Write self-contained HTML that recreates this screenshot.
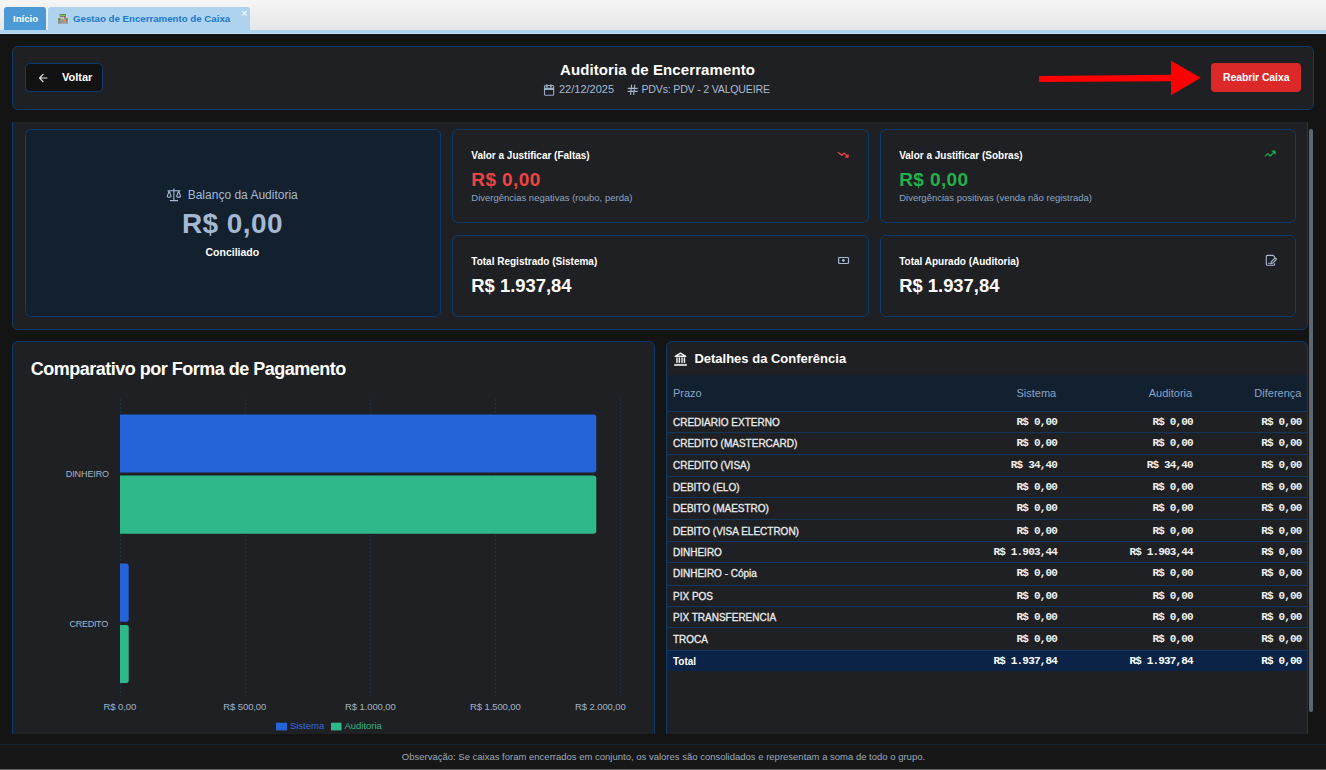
<!DOCTYPE html>
<html><head><meta charset="utf-8">
<style>
*{box-sizing:border-box;margin:0;padding:0}
html,body{width:1326px;height:770px;overflow:hidden;background:#141414;font-family:"Liberation Sans",sans-serif;color:#f2f2f2}
.a{position:absolute}
.t{position:absolute;line-height:1;white-space:nowrap}
.b{font-weight:bold}
.card{position:absolute;border:1px solid #0c3b6c;border-radius:6px;background:#1f2023}
.mono{font-family:"Liberation Mono",monospace}
</style></head><body>

<!-- tab bar -->
<div class="a" style="left:0;top:0;width:1326px;height:30px;background:linear-gradient(#f6f6f6,#e6e6e6)"></div>
<div class="a" style="left:4px;top:7px;width:42px;height:23px;background:#4b9ad6;border-radius:3px 3px 0 0"></div>
<div class="t b" style="left:13px;top:14.3px;font-size:9.6px;color:#fff">Início</div>
<div class="a" style="left:48px;top:7px;width:202px;height:23px;background:#afd2ee;border-radius:3px 3px 0 0"></div>
<svg class="a" style="left:57px;top:13px" width="12" height="12" viewBox="0 0 12 12">
 <rect x="2.8" y="1" width="5.9" height="2.7" fill="#4a4a4a"/><rect x="3.1" y="1.5" width="5.3" height="1.5" fill="#86c84e"/>
 <rect x="2.8" y="3.7" width="5.9" height="7" fill="#9a9a9a"/><rect x="3.6" y="4.2" width="1.2" height="2" fill="#e0e0e0"/><rect x="5.6" y="4.2" width="1.2" height="2" fill="#e0e0e0"/>
 <rect x="1" y="5.3" width="2.5" height="5.4" fill="#8d8d8d"/><rect x="1" y="5.3" width="2.5" height="1.4" fill="#5e9e3a"/>
 <rect x="8.6" y="5.3" width="2.1" height="5.4" fill="#8d8d8d"/><rect x="8.6" y="5.3" width="2.1" height="1.4" fill="#5e9e3a"/>
 <circle cx="7.8" cy="4.2" r="0.8" fill="#d94040"/><circle cx="7.5" cy="7.3" r="0.7" fill="#e9a020"/><rect x="9" y="7.2" width="1.4" height="0.9" fill="#c05050"/>
</svg>
<div class="t b" style="left:73px;top:14.2px;font-size:9.7px;color:#1a78cf">Gestao de Encerramento de Caixa</div>
<div class="t" style="left:241px;top:8px;font-size:11px;color:#fff">×</div>
<div class="a" style="left:0;top:30px;width:1326px;height:4px;background:#acd2ee;border-bottom:1px solid #c2e0f4"></div>

<!-- header card -->
<div class="card" style="left:12px;top:46px;width:1302px;height:64px"></div>
<div class="a" style="left:25px;top:63px;width:78px;height:29px;background:#121212;border:1px solid #0c3b6c;border-radius:5px"></div>
<svg class="a" style="left:38px;top:72.9px" width="10" height="10" viewBox="0 0 10 10"><path d="M8.9 5H1.6M5.1 1.3L1.6 5L5 8.7" fill="none" stroke="#e6e6e6" stroke-width="1.2" stroke-linecap="round" stroke-linejoin="round"/></svg>
<div class="t b" style="left:62px;top:71.5px;font-size:11px;color:#fff">Voltar</div>

<div class="t b" style="left:560px;top:62px;font-size:15px;color:#fff;letter-spacing:0.1px">Auditoria de Encerramento</div>
<svg class="a" style="left:543px;top:83px" width="12" height="13" viewBox="0 0 12 13"><rect x="1.5" y="2.5" width="9.2" height="9.8" rx="1" fill="none" stroke="#9aaec6" stroke-width="1.1"/><rect x="1.5" y="4.7" width="9.2" height="2.3" fill="#9aaec6"/><path d="M3.9 2V3.9M7.9 2V3.9" stroke="#9aaec6" stroke-width="1.6" stroke-linecap="round"/></svg>
<div class="t" style="left:559px;top:84px;font-size:11px;color:#a6bad2">22/12/2025</div>
<svg class="a" style="left:627px;top:84px" width="11" height="11" viewBox="0 0 11 11"><path d="M1.2 4.4H10.2M1.2 7.4H10.2M4.6 1L3.6 10.7M7.7 1L6.7 10.7" stroke="#a3b6cd" stroke-width="1.1" stroke-linecap="round"/></svg>
<div class="t" style="left:641.5px;top:84.2px;font-size:10.6px;color:#a6bad2;letter-spacing:-0.2px">PDVs: PDV - 2 VALQUEIRE</div>

<svg class="a" style="left:1030px;top:55px" width="180" height="45" viewBox="1030 55 180 45">
 <path d="M1039 76 L1172 74.8 L1172 81.2 L1039 82 Z" fill="#ff0000"/>
 <path d="M1171 60.8 L1200.8 77.8 L1171 95.3 Z" fill="#ff0000"/>
</svg>
<div class="a" style="left:1211px;top:63px;width:90px;height:29px;background:#dc2828;border-radius:4px"></div>
<div class="t b" style="left:1223px;top:72px;font-size:10.5px;color:#fff;letter-spacing:-0.1px">Reabrir Caixa</div>

<!-- scroll area -->
<div class="a" style="left:0;top:122px;width:1326px;height:612px;overflow:hidden">
 <div class="a" style="left:12px;top:-6px;width:1296px;height:214px;background:#1f2023;border:1px solid #0c3b6c;border-radius:6px"></div>
 <!-- balance -->
 <div class="card" style="left:25px;top:7px;width:416px;height:188px;background:#13202e"></div>
 <svg class="a" style="left:166px;top:65.5px" width="16" height="14" viewBox="0 0 16 14"><g fill="none" stroke="#a6bad2" stroke-width="1.1" stroke-linecap="round" stroke-linejoin="round"><path d="M7.9 0.9V12.5M4.3 12.6H11.6M1.9 2.9Q7.9 2 13.9 2.9M3.2 3L1.2 8.4Q3.2 10.4 5.2 8.4L3.2 3M12.6 3L10.6 8.4Q12.6 10.4 14.6 8.4L12.6 3"/></g></svg>
 <div class="t" style="left:187.7px;top:66.5px;font-size:12px;color:#a6bad2">Balanço da Auditoria</div>
 <div class="t b" style="left:182px;top:87.5px;font-size:28px;color:#a4b9d1;letter-spacing:0.4px">R$ 0,00</div>
 <div class="t b" style="left:205.5px;top:124.6px;font-size:10.5px;color:#fff">Conciliado</div>

 <!-- faltas -->
 <div class="card" style="left:452.3px;top:7px;width:416.6px;height:94px"></div>
 <div class="t b" style="left:471.3px;top:29.2px;font-size:10px;color:#fff">Valor a Justificar (Faltas)</div>
 <svg class="a" style="left:837px;top:28px" width="13" height="9" viewBox="0 0 13 9"><path d="M1 2.2L4.9 5.3L7.3 3.1L10.5 6.6M8.2 7.1H11V4.3" fill="none" stroke="#ef4444" stroke-width="1.3" stroke-linejoin="round"/></svg>
 <div class="t b" style="left:471.3px;top:48px;font-size:19px;color:#ef4444;letter-spacing:0.4px">R$ 0,00</div>
 <div class="t" style="left:471.3px;top:71px;font-size:9.5px;color:#8ea6c2">Divergências negativas (roubo, perda)</div>

 <!-- sobras -->
 <div class="card" style="left:880.3px;top:7px;width:415.7px;height:94px"></div>
 <div class="t b" style="left:899.2px;top:29.2px;font-size:10px;color:#fff">Valor a Justificar (Sobras)</div>
 <svg class="a" style="left:1264.3px;top:27px" width="13" height="9" viewBox="0 0 13 9"><path d="M0.9 7.4L3.8 4.6L6.2 7L10.5 2.7M7.7 2.2H11V5.4" fill="none" stroke="#1bae4f" stroke-width="1.3" stroke-linejoin="round"/></svg>
 <div class="t b" style="left:899.2px;top:48px;font-size:19px;color:#22b14c;letter-spacing:0.4px">R$ 0,00</div>
 <div class="t" style="left:899.2px;top:71px;font-size:9.5px;color:#8ea6c2">Divergências positivas (venda não registrada)</div>

 <!-- registrado -->
 <div class="card" style="left:452.3px;top:113px;width:416.6px;height:82px"></div>
 <div class="t b" style="left:471.3px;top:135.2px;font-size:10px;color:#fff">Total Registrado (Sistema)</div>
 <svg class="a" style="left:837px;top:134px" width="13" height="9" viewBox="0 0 13 9"><rect x="1.6" y="1.5" width="9.9" height="6" rx="1" fill="none" stroke="#a6bad2" stroke-width="1.2"/><circle cx="6.4" cy="4.4" r="1.4" fill="#a6bad2"/></svg>
 <div class="t b" style="left:471.3px;top:154.9px;font-size:18.4px;color:#fff">R$ 1.937,84</div>

 <!-- apurado -->
 <div class="card" style="left:880.3px;top:113px;width:415.7px;height:82px"></div>
 <div class="t b" style="left:899.2px;top:135.2px;font-size:10px;color:#fff">Total Apurado (Auditoria)</div>
 <svg class="a" style="left:1264px;top:132px" width="14" height="13" viewBox="0 0 14 13"><g fill="none" stroke="#a6bad2" stroke-width="1.1" stroke-linecap="round" stroke-linejoin="round"><path d="M10.6 3.6V2.9L9.1 1.4H3.4Q2.3 1.4 2.3 2.5V10.2Q2.3 11.3 3.4 11.3H9.6Q10.7 11.3 10.7 10.2V9.9"/><path d="M4.4 9.3H5.4"/><path d="M12.2 4.6Q11.3 3.7 10.4 4.6L7.6 7.4Q7.2 7.8 7.1 8.3L6.8 9.6L8.1 9.3Q8.6 9.2 9 8.8L11.8 6Q12.7 5.1 12.2 4.6Z"/></g></svg>
 <div class="t b" style="left:899.2px;top:154.9px;font-size:18.4px;color:#fff">R$ 1.937,84</div>

 <!-- chart card -->
 <div class="card" style="left:12px;top:219px;width:643px;height:420px"></div>
 <div class="t b" style="left:30.8px;top:238.4px;font-size:18px;color:#fff;letter-spacing:-0.5px">Comparativo por Forma de Pagamento</div>
 <svg class="a" style="left:0;top:0" width="660" height="612" viewBox="0 122 660 612">
  <g stroke="#1b3149" stroke-width="1" stroke-dasharray="2 2">
   <path d="M120.5 399V696M245.5 399V696M370.5 399V696M495.5 399V696M620.5 399V696"/>
  </g>
  <path d="M120 414.4H593.3Q596.3 414.4 596.3 417.4V469.6Q596.3 472.6 593.3 472.6H120Z" fill="#2563d9"/>
  <path d="M120 475.5H593.3Q596.3 475.5 596.3 478.5V530.8Q596.3 533.8 593.3 533.8H120Z" fill="#2fb98a"/>
  <path d="M120 563.6H126.4Q128.7 563.6 128.7 565.9V619.4Q128.7 621.7 126.4 621.7H120Z" fill="#2563d9"/>
  <path d="M120 625H126.4Q128.7 625 128.7 627.3V680.8Q128.7 683.1 126.4 683.1H120Z" fill="#2fb98a"/>
  <rect x="276" y="722.7" width="11" height="7.7" fill="#2563d9"/>
  <rect x="331" y="722.7" width="10.5" height="7.7" fill="#2fb98a"/>
 </svg>
 <div class="t" style="left:65.8px;top:348px;font-size:9px;color:#a3b4c8;letter-spacing:-0.1px">DINHEIRO</div>
 <div class="t" style="left:69.6px;top:497.5px;font-size:9px;color:#a3b4c8;letter-spacing:-0.3px">CREDITO</div>
 <div class="t" style="left:103.6px;top:580px;font-size:9.5px;color:#9fb2c8;letter-spacing:-0.1px">R$ 0,00</div>
 <div class="t" style="left:223.3px;top:580px;font-size:9.5px;color:#9fb2c8;letter-spacing:-0.1px">R$ 500,00</div>
 <div class="t" style="left:345px;top:580px;font-size:9.5px;color:#9fb2c8;letter-spacing:-0.1px">R$ 1.000,00</div>
 <div class="t" style="left:470px;top:580px;font-size:9.5px;color:#9fb2c8;letter-spacing:-0.1px">R$ 1.500,00</div>
 <div class="t" style="left:575px;top:580px;font-size:9.5px;color:#9fb2c8;letter-spacing:-0.1px">R$ 2.000,00</div>
 <div class="t" style="left:289.9px;top:598.6px;font-size:9.5px;color:#2f6ae0">Sistema</div>
 <div class="t" style="left:344.4px;top:598.6px;font-size:9.5px;color:#2fb98a">Auditoria</div>

 <!-- table card -->
 <div class="card" style="left:666px;top:219px;width:642px;height:420px"></div>
 <svg class="a" style="left:673px;top:230px" width="15" height="15" viewBox="0 0 15 15"><path d="M7.5 1.2L2.2 4.3H12.8Z" fill="none" stroke="#f0f0f0" stroke-width="1.5" stroke-linejoin="round"/><rect x="3.1" y="5.4" width="1.7" height="5.5" fill="#cfcfcf"/><rect x="5.6" y="5.4" width="1.5" height="5.5" fill="#eeeeee"/><rect x="8.2" y="5.4" width="1.7" height="5.5" fill="#cfcfcf"/><rect x="10.7" y="5.4" width="1.5" height="5.5" fill="#eeeeee"/><rect x="1.2" y="11.9" width="12.7" height="2.1" fill="#c8c8c8"/></svg>
 <div class="t b" style="left:694.4px;top:229.80px;font-size:13px;color:#fff">Detalhes da Conferência</div>
 <div class="a" style="left:667px;top:253.00px;width:640px;height:36.00px;background:#122030"></div>
 <div class="t" style="left:673.00px;top:265.69px;font-size:11px;color:#8aa4c2;">Prazo</div>
 <div class="t" style="right:269.80px;top:265.69px;font-size:11px;color:#8aa4c2;">Sistema</div>
 <div class="t" style="right:133.90px;top:265.69px;font-size:11px;color:#8aa4c2;">Auditoria</div>
 <div class="t" style="right:24.60px;top:265.69px;font-size:11px;color:#8aa4c2;">Diferença</div>
 <div class="a" style="left:667px;top:288.70px;width:640px;height:1px;background:#11375f"></div>
 <div class="a" style="left:667px;top:310.00px;width:640px;height:1px;background:#11375f"></div>
 <div class="a" style="left:667px;top:331.50px;width:640px;height:1px;background:#11375f"></div>
 <div class="a" style="left:667px;top:354.10px;width:640px;height:1px;background:#11375f"></div>
 <div class="a" style="left:667px;top:375.10px;width:640px;height:1px;background:#11375f"></div>
 <div class="a" style="left:667px;top:396.60px;width:640px;height:1px;background:#11375f"></div>
 <div class="a" style="left:667px;top:418.90px;width:640px;height:1px;background:#11375f"></div>
 <div class="a" style="left:667px;top:440.20px;width:640px;height:1px;background:#11375f"></div>
 <div class="a" style="left:667px;top:462.70px;width:640px;height:1px;background:#11375f"></div>
 <div class="a" style="left:667px;top:484.00px;width:640px;height:1px;background:#11375f"></div>
 <div class="a" style="left:667px;top:505.30px;width:640px;height:1px;background:#11375f"></div>
 <div class="a" style="left:667px;top:527.60px;width:640px;height:1px;background:#11375f"></div>
 <div class="a" style="left:667px;top:528.60px;width:640px;height:20.30px;background:#0a2346"></div>
 <div class="t" style="left:673.00px;top:296.04px;font-size:10px;color:#ececec;-webkit-text-stroke:0.3px #ececec">CREDIARIO EXTERNO</div>
 <div class="t mono" style="right:269.03px;top:295.27px;font-size:11px;color:#f0f0f0;letter-spacing:-0.83px;font-weight:bold">R$ 0,00</div>
 <div class="t mono" style="right:133.13px;top:295.27px;font-size:11px;color:#f0f0f0;letter-spacing:-0.83px;font-weight:bold">R$ 0,00</div>
 <div class="t mono" style="right:24.43px;top:295.27px;font-size:11px;color:#f0f0f0;letter-spacing:-0.83px;font-weight:bold">R$ 0,00</div>
 <div class="t" style="left:673.00px;top:317.04px;font-size:10px;color:#ececec;-webkit-text-stroke:0.3px #ececec">CREDITO (MASTERCARD)</div>
 <div class="t mono" style="right:269.03px;top:316.27px;font-size:11px;color:#f0f0f0;letter-spacing:-0.83px;font-weight:bold">R$ 0,00</div>
 <div class="t mono" style="right:133.13px;top:316.27px;font-size:11px;color:#f0f0f0;letter-spacing:-0.83px;font-weight:bold">R$ 0,00</div>
 <div class="t mono" style="right:24.43px;top:316.27px;font-size:11px;color:#f0f0f0;letter-spacing:-0.83px;font-weight:bold">R$ 0,00</div>
 <div class="t" style="left:673.00px;top:339.04px;font-size:10px;color:#ececec;-webkit-text-stroke:0.3px #ececec">CREDITO (VISA)</div>
 <div class="t mono" style="right:269.03px;top:338.27px;font-size:11px;color:#f0f0f0;letter-spacing:-0.83px;font-weight:bold">R$ 34,40</div>
 <div class="t mono" style="right:133.13px;top:338.27px;font-size:11px;color:#f0f0f0;letter-spacing:-0.83px;font-weight:bold">R$ 34,40</div>
 <div class="t mono" style="right:24.43px;top:338.27px;font-size:11px;color:#f0f0f0;letter-spacing:-0.83px;font-weight:bold">R$ 0,00</div>
 <div class="t" style="left:673.00px;top:361.04px;font-size:10px;color:#ececec;-webkit-text-stroke:0.3px #ececec">DEBITO (ELO)</div>
 <div class="t mono" style="right:269.03px;top:360.27px;font-size:11px;color:#f0f0f0;letter-spacing:-0.83px;font-weight:bold">R$ 0,00</div>
 <div class="t mono" style="right:133.13px;top:360.27px;font-size:11px;color:#f0f0f0;letter-spacing:-0.83px;font-weight:bold">R$ 0,00</div>
 <div class="t mono" style="right:24.43px;top:360.27px;font-size:11px;color:#f0f0f0;letter-spacing:-0.83px;font-weight:bold">R$ 0,00</div>
 <div class="t" style="left:673.00px;top:382.04px;font-size:10px;color:#ececec;-webkit-text-stroke:0.3px #ececec">DEBITO (MAESTRO)</div>
 <div class="t mono" style="right:269.03px;top:381.27px;font-size:11px;color:#f0f0f0;letter-spacing:-0.83px;font-weight:bold">R$ 0,00</div>
 <div class="t mono" style="right:133.13px;top:381.27px;font-size:11px;color:#f0f0f0;letter-spacing:-0.83px;font-weight:bold">R$ 0,00</div>
 <div class="t mono" style="right:24.43px;top:381.27px;font-size:11px;color:#f0f0f0;letter-spacing:-0.83px;font-weight:bold">R$ 0,00</div>
 <div class="t" style="left:673.00px;top:405.04px;font-size:10px;color:#ececec;-webkit-text-stroke:0.3px #ececec">DEBITO (VISA ELECTRON)</div>
 <div class="t mono" style="right:269.03px;top:404.27px;font-size:11px;color:#f0f0f0;letter-spacing:-0.83px;font-weight:bold">R$ 0,00</div>
 <div class="t mono" style="right:133.13px;top:404.27px;font-size:11px;color:#f0f0f0;letter-spacing:-0.83px;font-weight:bold">R$ 0,00</div>
 <div class="t mono" style="right:24.43px;top:404.27px;font-size:11px;color:#f0f0f0;letter-spacing:-0.83px;font-weight:bold">R$ 0,00</div>
 <div class="t" style="left:673.00px;top:426.04px;font-size:10px;color:#ececec;-webkit-text-stroke:0.3px #ececec">DINHEIRO</div>
 <div class="t mono" style="right:269.03px;top:425.27px;font-size:11px;color:#f0f0f0;letter-spacing:-0.83px;font-weight:bold">R$ 1.903,44</div>
 <div class="t mono" style="right:133.13px;top:425.27px;font-size:11px;color:#f0f0f0;letter-spacing:-0.83px;font-weight:bold">R$ 1.903,44</div>
 <div class="t mono" style="right:24.43px;top:425.27px;font-size:11px;color:#f0f0f0;letter-spacing:-0.83px;font-weight:bold">R$ 0,00</div>
 <div class="t" style="left:673.00px;top:447.04px;font-size:10px;color:#ececec;-webkit-text-stroke:0.3px #ececec">DINHEIRO - Cópia</div>
 <div class="t mono" style="right:269.03px;top:446.27px;font-size:11px;color:#f0f0f0;letter-spacing:-0.83px;font-weight:bold">R$ 0,00</div>
 <div class="t mono" style="right:133.13px;top:446.27px;font-size:11px;color:#f0f0f0;letter-spacing:-0.83px;font-weight:bold">R$ 0,00</div>
 <div class="t mono" style="right:24.43px;top:446.27px;font-size:11px;color:#f0f0f0;letter-spacing:-0.83px;font-weight:bold">R$ 0,00</div>
 <div class="t" style="left:673.00px;top:470.04px;font-size:10px;color:#ececec;-webkit-text-stroke:0.3px #ececec">PIX POS</div>
 <div class="t mono" style="right:269.03px;top:469.27px;font-size:11px;color:#f0f0f0;letter-spacing:-0.83px;font-weight:bold">R$ 0,00</div>
 <div class="t mono" style="right:133.13px;top:469.27px;font-size:11px;color:#f0f0f0;letter-spacing:-0.83px;font-weight:bold">R$ 0,00</div>
 <div class="t mono" style="right:24.43px;top:469.27px;font-size:11px;color:#f0f0f0;letter-spacing:-0.83px;font-weight:bold">R$ 0,00</div>
 <div class="t" style="left:673.00px;top:491.04px;font-size:10px;color:#ececec;-webkit-text-stroke:0.3px #ececec">PIX TRANSFERENCIA</div>
 <div class="t mono" style="right:269.03px;top:490.27px;font-size:11px;color:#f0f0f0;letter-spacing:-0.83px;font-weight:bold">R$ 0,00</div>
 <div class="t mono" style="right:133.13px;top:490.27px;font-size:11px;color:#f0f0f0;letter-spacing:-0.83px;font-weight:bold">R$ 0,00</div>
 <div class="t mono" style="right:24.43px;top:490.27px;font-size:11px;color:#f0f0f0;letter-spacing:-0.83px;font-weight:bold">R$ 0,00</div>
 <div class="t" style="left:673.00px;top:513.03px;font-size:10px;color:#ececec;-webkit-text-stroke:0.3px #ececec">TROCA</div>
 <div class="t mono" style="right:269.03px;top:512.27px;font-size:11px;color:#f0f0f0;letter-spacing:-0.83px;font-weight:bold">R$ 0,00</div>
 <div class="t mono" style="right:133.13px;top:512.27px;font-size:11px;color:#f0f0f0;letter-spacing:-0.83px;font-weight:bold">R$ 0,00</div>
 <div class="t mono" style="right:24.43px;top:512.27px;font-size:11px;color:#f0f0f0;letter-spacing:-0.83px;font-weight:bold">R$ 0,00</div>
 <div class="t b" style="left:673.00px;top:535.03px;font-size:10px;color:#fff;">Total</div>
 <div class="t mono" style="right:269.03px;top:534.27px;font-size:11px;color:#fff;letter-spacing:-0.83px;font-weight:bold">R$ 1.937,84</div>
 <div class="t mono" style="right:133.13px;top:534.27px;font-size:11px;color:#fff;letter-spacing:-0.83px;font-weight:bold">R$ 1.937,84</div>
 <div class="t mono" style="right:24.43px;top:534.27px;font-size:11px;color:#fff;letter-spacing:-0.83px;font-weight:bold">R$ 0,00</div>
</div>

<!-- scrollbar thumb -->
<div class="a" style="left:1309px;top:128.7px;width:4px;height:583.6px;background:#5d6772;border-radius:2px"></div>

<!-- footer -->
<div class="a" style="left:0;top:744px;width:1326px;height:25px;background:#171717;border-top:1px solid #13253a"></div>
<div class="t" style="left:401.8px;top:751.8px;font-size:9.5px;color:#9aaabb">Observação: Se caixas foram encerrados em conjunto, os valores são consolidados e representam a soma de todo o grupo.</div>
<div class="a" style="left:0;top:769px;width:1326px;height:1px;background:#666"></div>
</body></html>
